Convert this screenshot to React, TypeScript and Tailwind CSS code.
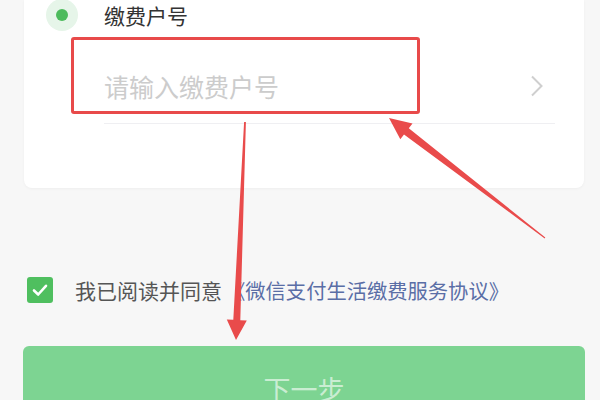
import React from 'react';

const font = { fontFamily: '"Noto Sans CJK SC", "Noto Sans", sans-serif' };

const Annotations: React.FC = () => (
  <>
    <div className="pointer-events-none absolute left-[71px] top-[37px] h-[77px] w-[349px] rounded-[3px] border-[3px] border-[#e84a4a]" />
    <svg className="pointer-events-none absolute left-0 top-0" width="600" height="400" viewBox="0 0 600 400">
      <polygon
        fill="#e94b4b"
        points="389,118 412.5,123.5 408.8,128.2 545.3,237.6 544.7,238.4 404,134.6 400.3,139.3"
      />
      <polygon
        fill="#e94b4b"
        points="236,340 246.8,320.4 240.3,320.2 245.9,122 244.1,122 233.3,319.8 226.8,319.6"
      />
    </svg>
  </>
);

const App: React.FC = () => {
  return (
    <div className="relative h-[400px] w-[600px] overflow-hidden bg-[#f7f7f7]" style={font}>
      <div className="mx-[24px] w-[560px] rounded-b-lg bg-white shadow-[0_1px_3px_rgba(0,0,0,0.04)]">
        <div className="flex h-[30px] items-center">
          <div className="ml-[22px] flex h-[32px] w-[32px] items-center justify-center rounded-full bg-[#e6f5e9]">
            <div className="h-[12px] w-[12px] rounded-full bg-[#4cbb5c]" />
          </div>
          <span className="ml-[26px] text-[21px] leading-none text-[#333333]">缴费户号</span>
        </div>
        <div className="ml-[80px] mr-[29px] flex h-[94px] items-center justify-between border-b border-[#efeff2] pt-[19px]">
          <span className="text-[25px] leading-none text-[#cccccc]">请输入缴费户号</span>
          <svg className="mr-[11px]" width="14" height="22" viewBox="0 0 14 22" fill="none">
            <path d="M2 1.5 L11.5 11 L2 20.5" stroke="#cfcfcf" strokeWidth="2" />
          </svg>
        </div>
        <div className="h-[64px]" />
      </div>

      <div className="mt-[89px] flex items-center pl-[27px]">
        <div className="flex h-[26px] w-[26px] items-center justify-center rounded-[3px] bg-[#4fbf5f]">
          <svg width="18" height="18" viewBox="0 0 18 18" fill="none">
            <path d="M3 9.5 L7.2 13.5 L15 4.8" stroke="#ffffff" strokeWidth="2.6" strokeLinecap="round" strokeLinejoin="round" />
          </svg>
        </div>
        <span className="ml-[22px] text-[21px] leading-none text-[#555555]">我已阅读并同意</span>
        <span className="ml-[3px] text-[20.3px] leading-none text-[#5a6ea6]">《微信支付生活缴费服务协议》</span>
      </div>

      <div className="ml-[23px] mr-[15px] mt-[43px] flex h-[84px] items-center justify-center rounded-[6px] bg-[#7dd492]">
        <span className="text-[27px] leading-none text-white/60">下一步</span>
      </div>

      <Annotations />
    </div>
  );
};

export default App;
